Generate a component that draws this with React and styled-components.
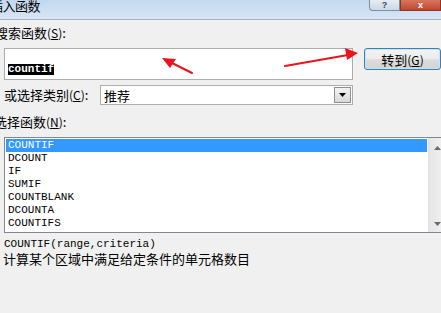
import styled, { createGlobalStyle } from 'styled-components';

const Global = createGlobalStyle`
    html, body { margin: 0; padding: 0; }
    body { background: #f0f0f0; }
`

const cjk = `"Noto Sans CJK SC", "Noto Sans", sans-serif`
const mono = `"Liberation Mono", "Courier New", monospace`

const Window = styled.div`
    position: relative;
    width: 441px;
    height: 313px;
    overflow: hidden;
    background: #f0f0f0;
    display: flex;
    flex-direction: column;
    font-family: ${cjk};
    color: #000;
`
const TitleBar = styled.div`
    height: 19px;
    flex: none;
    display: flex;
    align-items: flex-start;
    background: linear-gradient(#c3d8ef, #d8e6f5);
    border-bottom: 1px solid #a7b4c3;
`
const Title = styled.div`
    margin-left: -10px;
    margin-top: -1px;
    font-size: 13px;
    line-height: 13px;
    letter-spacing: -0.5px;
`
const Caption = styled.div`
    margin-left: auto;
    display: flex;
    height: 11px;
`
const CapButton = styled.div`
    width: ${p => p.w}px;
    height: 11px;
    display: flex;
    align-items: center;
    justify-content: center;
    font: bold 9px "Liberation Sans", sans-serif;
    line-height: 9px;
    color: ${p => p.close ? '#fff' : '#3d4a5c'};
    background: ${p => p.close ? 'linear-gradient(#d8765f, #c24630)' : 'linear-gradient(#e6ecf3, #cdd8e4)'};
    border: 1px solid ${p => p.close ? '#8e3424' : '#7d8ea3'};
    border-top: none;
    border-radius: ${p => p.close ? '0' : '0 0 0 4px'};
    box-sizing: border-box;
`
const Body = styled.div`
    flex: 1;
    display: flex;
    flex-direction: column;
`
const Label = styled.div`
    font-size: 13px;
    line-height: 16px;
    height: 16px;
    white-space: nowrap;
    margin-top: ${p => p.top || 0}px;
    margin-left: ${p => p.left || 0}px;
`
const Key = styled.span`
    font-size: 12px;
    u { text-decoration: underline; }
`
const Row = styled.div`
    display: flex;
    align-items: ${p => p.center ? 'center' : 'flex-start'};
    margin-top: ${p => p.top || 0}px;
    padding-left: 4px;
`
const SearchBox = styled.div`
    width: 349px;
    height: 32px;
    box-sizing: border-box;
    background: #fff;
    border: 1px solid #abadb3;
    padding: 4px 0 0 3px;
`
const Selected = styled.span`
    background: #000;
    color: #fff;
    font: bold 11px/11px ${mono};
    display: inline-block;
`
const GoButton = styled.div`
    margin-left: 11px;
    width: 77px;
    height: 22px;
    box-sizing: border-box;
    border: 1px solid #3c7fb1;
    border-radius: 3px;
    background: linear-gradient(#f4f4f4 0%, #ececec 50%, #dedede 51%, #d2d2d2 100%);
    box-shadow: inset 0 0 0 1px #c4e5f8;
    display: flex;
    align-items: center;
    justify-content: center;
    font-size: 13px;
    line-height: 13px;
`
const CatLabel = styled.div`
    width: 96px;
    font-size: 13px;
    line-height: 16px;
    white-space: nowrap;
`
const Select = styled.div`
    width: 253px;
    height: 20px;
    box-sizing: border-box;
    background: #fff;
    border: 1px solid #abadb3;
    display: flex;
    align-items: center;
    padding-left: 3px;
    font-size: 13px;
`
const DropBtn = styled.div`
    margin-left: auto;
    width: 17px;
    height: 16px;
    margin-right: 1px;
    box-sizing: border-box;
    border: 1px solid #8f8f8f;
    background: linear-gradient(#f2f2f2, #d9d9d9);
    display: flex;
    align-items: center;
    justify-content: center;
`
const ListBox = styled.div`
    margin-top: 7px;
    margin-left: 4px;
    width: 442px;
    height: 96px;
    box-sizing: border-box;
    border: 1px solid #828790;
    background: #fff;
    display: flex;
    flex: none;
`
const Items = styled.div`
    flex: 1;
    padding: 1px 1px 0 1px;
`
const Item = styled.div`
    height: 13px;
    font: 11px/13px ${mono};
    padding-left: 2px;
    background: ${p => p.active ? '#3399ff' : 'transparent'};
    color: ${p => p.active ? '#fff' : '#000'};
`
const ScrollBar = styled.div`
    width: 17px;
    background: linear-gradient(90deg, #e6e6e6, #f2f2f2);
    border-left: 1px solid #e0e0e0;
    display: flex;
    flex-direction: column;
    justify-content: space-between;
    align-items: center;
    padding: 8px 0 6px;
    box-sizing: border-box;
`
const Syntax = styled.div`
    margin: 4px 0 0 4px;
    font: 11px/14px ${mono};
    white-space: nowrap;
`
const Desc = styled.div`
    margin: 0 0 0 3px;
    font-size: 13px;
    line-height: 16px;
    white-space: nowrap;
`
const Marks = styled.svg`
    position: absolute;
    left: 0;
    top: 0;
    pointer-events: none;
`

const funcs = ['COUNTIF', 'DCOUNT', 'IF', 'SUMIF', 'COUNTBLANK', 'DCOUNTA', 'COUNTIFS']

function Tri({ down, color = '#000', w = 7, h = 4 }) {
    return (
        <svg width={w} height={h} viewBox={`0 0 ${w} ${h}`}>
            {down
                ? <polygon points={`0,0 ${w},0 ${w / 2},${h}`} fill={color} />
                : <polygon points={`0,${h} ${w},${h} ${w / 2},0`} fill={color} />}
        </svg>
    )
}

function App() {
    return (
        <Window>
            <Global />
            <TitleBar>
                <Title>插入函数</Title>
                <Caption>
                    <CapButton w={31}>?</CapButton>
                    <CapButton w={41} close>x</CapButton>
                </Caption>
            </TitleBar>
            <Body>
                <Label top={5} left={-5}>搜索函数<Key>(<u>S</u>)</Key>:</Label>
                <Row top={7}>
                    <SearchBox><Selected>countif</Selected></SearchBox>
                    <GoButton>转到<Key>(<u>G</u>)</Key></GoButton>
                </Row>
                <Row top={5} center>
                    <CatLabel>或选择类别<Key>(<u>C</u>)</Key>:</CatLabel>
                    <Select>
                        推荐
                        <DropBtn><Tri down /></DropBtn>
                    </Select>
                </Row>
                <Label top={9} left={-6}>选择函数<Key>(<u>N</u>)</Key>:</Label>
                <ListBox>
                    <Items>
                        {funcs.map((f, i) => <Item key={f} active={i === 0}>{f}</Item>)}
                    </Items>
                    <ScrollBar>
                        <Tri color="#6b6b6b" w={7} h={4} />
                        <Tri down color="#6b6b6b" w={7} h={4} />
                    </ScrollBar>
                </ListBox>
                <Syntax>COUNTIF(range,criteria)</Syntax>
                <Desc>计算某个区域中满足给定条件的单元格数目</Desc>
            </Body>
            <Marks width="441" height="313">
                <g stroke="#e8151c" strokeWidth="2" fill="#e8151c" strokeLinecap="round">
                    <line x1="192" y1="73" x2="170" y2="62" />
                    <polygon points="162,58 176,59 170,68" stroke="none" />
                    <line x1="285" y1="66" x2="348" y2="55" />
                    <polygon points="358,53 345,48 347,60" stroke="none" />
                </g>
            </Marks>
        </Window>
    )
}
export default App
